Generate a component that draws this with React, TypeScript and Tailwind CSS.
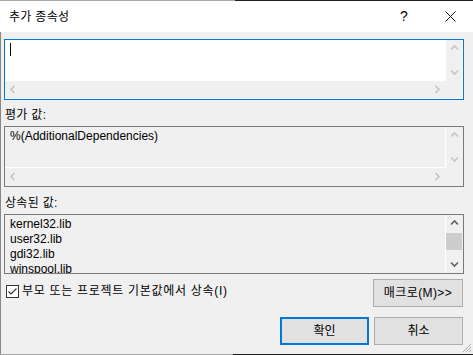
import React from "react";

function Chevron({ dir, color }: { dir: "up" | "down" | "left" | "right"; color: string }) {
  const d = {
    up: "M1 5.5 L4.5 2 L8 5.5",
    down: "M1 2.5 L4.5 6 L8 2.5",
    left: "M5.5 1 L2 4.5 L5.5 8",
    right: "M2.5 1 L6 4.5 L2.5 8",
  }[dir];
  return (
    <svg width="9" height="9" viewBox="0 0 9 9">
      <path d={d} fill="none" stroke={color} strokeWidth="1.6" />
    </svg>
  );
}

function VScroll({ color, thumb }: { color: string; thumb?: boolean }) {
  return (
    <div className="flex flex-col h-full">
      <div className="h-[17px] flex items-center justify-center shrink-0">
        <Chevron dir="up" color={color} />
      </div>
      <div className="flex-1">
        {thumb && <div className="mt-px h-[17px] bg-[#cdcdcd]" />}
      </div>
      <div className="h-[17px] flex items-center justify-center shrink-0">
        <Chevron dir="down" color={color} />
      </div>
    </div>
  );
}

function HScroll({ color }: { color: string }) {
  return (
    <div className="flex items-center justify-between h-full px-[4px]">
      <Chevron dir="left" color={color} />
      <Chevron dir="right" color={color} />
    </div>
  );
}

export default function App() {
  return (
    <div className="w-[473px] h-[355px] overflow-hidden flex flex-col bg-[#f0f0f0] relative font-['Liberation_Sans','Noto_Sans_CJK_KR',sans-serif] text-[12px] text-black">
      <div className="flex h-px shrink-0">
        <div className="w-[235px] bg-[#a8a8a8]" />
        <div className="flex-1 bg-[#1f1f1f]" />
      </div>

      {/* title bar */}
      <div className="h-[31px] bg-white flex items-center justify-between shrink-0">
        <span className="pl-[9px] leading-[16px] tracking-[0.3px]">추가 종속성</span>
        <div className="flex h-full">
          <div className="w-[46px] flex items-center justify-center text-[14px] pb-px">?</div>
          <div className="w-[46px] flex items-center justify-center">
            <svg width="11" height="11" viewBox="0 0 11 11">
              <path d="M0.5 0.5 L10.5 10.5 M10.5 0.5 L0.5 10.5" stroke="#111" strokeWidth="1" />
            </svg>
          </div>
        </div>
      </div>

      <div className="flex-1 border-l border-[#888888] pl-[3px] pr-[9px] pt-[7px] flex flex-col">
        {/* edit box */}
        <div className="h-[61px] border border-[#0078d7] bg-white pr-px pb-px grid grid-cols-[1fr_16px] grid-rows-[41px_1fr]">
          <div className="bg-white pl-[5px] pt-[3px]">
            <div className="w-px h-[13px] bg-black" />
          </div>
          <div className="bg-[#f0f0f0]">
            <VScroll color="#c4c4c4" />
          </div>
          <div className="bg-[#f0f0f0]">
            <HScroll color="#c4c4c4" />
          </div>
          <div className="bg-[#f0f0f0]" />
        </div>

        <div className="h-[26px] pt-[7px] pl-px leading-[16px] tracking-[0.3px]">평가 값:</div>

        {/* evaluated value */}
        <div className="h-[61px] border border-[#7a7a7a] bg-[#f0f0f0] pr-px pb-px grid grid-cols-[1fr_16px] grid-rows-[41px_1fr]">
          <div className="border-r border-b border-white pl-[5px] pt-[2px] leading-[15px]">
            %(AdditionalDependencies)
          </div>
          <div>
            <VScroll color="#c4c4c4" />
          </div>
          <div>
            <HScroll color="#c4c4c4" />
          </div>
          <div />
        </div>

        <div className="h-[27px] pt-[8px] pl-px leading-[16px] tracking-[0.3px]">상속된 값:</div>

        {/* inherited values */}
        <div className="h-[60px] border border-[#7a7a7a] bg-[#f0f0f0] pr-px flex overflow-hidden">
          <div className="flex-1 border-r border-white pl-[5px] pt-[2px] leading-[15px] overflow-hidden">
            <div>kernel32.lib</div>
            <div>user32.lib</div>
            <div>gdi32.lib</div>
            <div>winspool.lib</div>
          </div>
          <div className="w-[16px]">
            <VScroll color="#606060" thumb />
          </div>
        </div>

        {/* checkbox + macro */}
        <div className="flex justify-between items-start pt-[5px]">
          <div className="flex items-center mt-[4px] ml-[2px] gap-[3px]">
            <div className="w-[13px] h-[13px] border border-[#333333] bg-white flex items-center justify-center">
              <svg width="11" height="11" viewBox="0 0 11 11">
                <path d="M1.5 5.5 L4 8 L9.5 2.5" fill="none" stroke="#333333" strokeWidth="1.2" />
              </svg>
            </div>
            <span className="leading-[16px] tracking-[0.7px]">부모 또는 프로젝트 기본값에서 상속(I)</span>
          </div>
          <button className="w-[90px] h-[28px] mr-px border border-[#adadad] bg-[#e1e1e1] leading-[16px] tracking-[0.4px]">
            매크로(M)&gt;&gt;
          </button>
        </div>

        <div className="flex justify-end gap-[5px] mt-[10px] pr-px">
          <button className="w-[89px] h-[28px] border-2 border-[#0078d7] bg-[#e1e1e1] leading-[16px]">확인</button>
          <button className="w-[89px] h-[28px] border border-[#adadad] bg-[#e1e1e1] leading-[16px]">취소</button>
        </div>
      </div>

      <div className="flex h-px shrink-0">
        <div className="w-[233px] bg-[#a8a8a8]" />
        <div className="flex-1 bg-[#1f1f1f]" />
      </div>

      {/* resize grip */}
      <svg className="absolute right-px bottom-[2px]" width="10" height="10" viewBox="0 0 10 10">
        <path d="M9 1 L1 9 M9 4 L4 9 M9 7 L7 9" stroke="#b0b0b0" strokeWidth="1" />
      </svg>
    </div>
  );
}
